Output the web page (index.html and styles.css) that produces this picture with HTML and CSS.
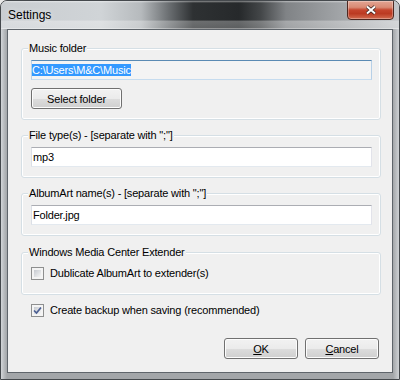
FILE: index.html
```html
<!DOCTYPE html>
<html lang="en">
<head>
  <meta charset="UTF-8">
  <title>Settings</title>
  <link rel="stylesheet" href="styles.css">
</head>
<body>

  <div class="window">
    <div class="titlebar">
      <span class="title">Settings</span>
      <button class="close" title="Close">
        <svg width="12" height="10" viewBox="0 0 12 10">
          <path d="M2 1.5 L10 8.5 M10 1.5 L2 8.5" stroke="#3b2622" stroke-width="3.6" fill="none"/>
          <path d="M2 1.5 L10 8.5 M10 1.5 L2 8.5" stroke="#fff" stroke-width="2" fill="none"/>
        </svg>
      </button>
    </div>

    <div class="client">
      <fieldset class="group first">
        <legend>Music folder</legend>
        <div class="textbox focused"><span class="sel">C:\Users\M&amp;C\Music</span></div>
        <button class="btn wide">Select folder</button>
      </fieldset>

      <fieldset class="group">
        <legend>File type(s) - [separate with ";"]</legend>
        <div class="textbox">mp3</div>
      </fieldset>

      <fieldset class="group">
        <legend>AlbumArt name(s) - [separate with ";"]</legend>
        <div class="textbox">Folder.jpg</div>
      </fieldset>

      <fieldset class="group extender">
        <legend>Windows Media Center Extender</legend>
        <label class="checkrow">
          <span class="check"></span>
          Dublicate AlbumArt to extender(s)
        </label>
      </fieldset>

      <label class="checkrow backup">
        <span class="check">
          <svg width="11" height="11" viewBox="0 0 11 11">
            <path d="M2 5.5 L4.5 8 L9 2.5" stroke="#4c5f93" stroke-width="1.7" fill="none"/>
          </svg>
        </span>
        Create backup when saving (recommended)
      </label>

      <div class="actions">
        <button class="btn"><u>O</u>K</button>
        <button class="btn"><u>C</u>ancel</button>
      </div>
    </div>
  </div>

</body>
</html>
```

FILE: styles.css
```css
body {
  margin: 0;
  background: #e9e9e9;
  font-family: 'Liberation Sans', Arial, sans-serif;
  color: #000;
}

.window {
  width: 400px;
  height: 380px;
  box-sizing: border-box;
  border: 1px solid #45494d;
  border-radius: 7px 7px 0 0;
  background: linear-gradient(to right, #d3d6d9 0, #b9bcbf 3px, #a3a6a9 6px, #a3a6a9 392px, #b9bcbf 395px, #cfd2d5 398px);
  display: flex;
  flex-direction: column;
  overflow: hidden;
}

.titlebar {
  height: 28px;
  display: flex;
  align-items: flex-start;
  background:
    linear-gradient(to bottom, rgba(255,255,255,0.45) 0, rgba(255,255,255,0) 2px, rgba(255,255,255,0) 68%, rgba(255,255,255,0.3) 72%, rgba(255,255,255,0.25) 96%, rgba(255,255,255,0.7) 100%),
    linear-gradient(to right, #c9cdd1 0, #d0d4d7 100px, #b6babd 140px, #6a6e71 168px, #2e3133 192px, #26292b 238px, #444749 260px, #808386 285px, #96999c 320px, #aeb1b4 360px, #c4c7ca 400px);
}

.title {
  padding: 7px 0 0 7px;
  font-size: 12px;
  line-height: 14px;
  text-shadow: 0 0 6px rgba(255,255,255,0.7);
}

.close {
  width: 47px;
  height: 20px;
  margin: -1px 5px 0 auto;
  padding: 0;
  border: 1px solid #4e2821;
  border-radius: 0 0 4px 4px;
  background: linear-gradient(to bottom, #e3a593 0, #d98a74 35%, #c5452d 50%, #bb3a22 70%, #d36c50 100%);
  box-shadow: inset 0 0 0 1px rgba(255,255,255,0.3);
  display: flex;
  align-items: center;
  justify-content: center;
}

.client {
  flex: 1;
  margin: 0 6px 6px;
  border: 1px solid #5f656b;
  background: #f0f0f0;
  padding: 12px 11px 0 13px;
  font-size: 11px;
  line-height: 13px;
  letter-spacing: -0.18px;
}

.group {
  margin: 9px 0 0;
  padding: 5px 8px 10px 9px;
  border: 1px solid #d5dfe5;
  border-radius: 3px;
  box-shadow: inset 0 0 0 1px #fff;
}

.group.first {
  margin-top: 0;
}

.group.extender {
  margin-top: 10px;
  padding-top: 8px;
  padding-bottom: 14px;
}

.group legend {
  margin-left: -3px;
  padding: 0 1px;
  background: #f0f0f0;
  line-height: 13px;
}

.textbox {
  height: 20px;
  box-sizing: border-box;
  border: 1px solid;
  border-color: #abadb3 #e2e3ea #e3e9ef #dbdfe6;
  background: #fff;
  padding: 0 1px;
  line-height: 18px;
  white-space: nowrap;
}

.textbox.focused {
  border-color: #5b8bb4 #b7d0e7 #c6dcef #b7d0e7;
  background: #f4f4f4;
  padding: 0;
}

.sel {
  background: #3399ff;
  color: #fff;
}

.btn {
  width: 74px;
  height: 21px;
  padding: 0;
  border: 1px solid #707070;
  border-radius: 3px;
  background: linear-gradient(to bottom, #f2f2f2 0, #ebebeb 50%, #dddddd 50%, #cfcfcf 100%);
  box-shadow: inset 0 0 0 1px #fcfcfc;
  font-family: inherit;
  font-size: 11px;
  letter-spacing: inherit;
  color: #000;
}

.btn.wide {
  display: block;
  width: 91px;
  margin-top: 8px;
}

.checkrow {
  display: flex;
  align-items: center;
  gap: 6px;
  height: 13px;
}

.checkrow.backup {
  margin: 9px 0 0 10px;
}

.check {
  width: 13px;
  height: 13px;
  box-sizing: border-box;
  border: 1px solid #8e8f8f;
  background: linear-gradient(135deg, #c6cad0, #f5f5f5) 2px 2px / 7px 7px no-repeat, #f4f4f4;
  display: flex;
}

.actions {
  display: flex;
  justify-content: flex-end;
  gap: 7px;
  margin: 21px 2px 0 0;
}
```
